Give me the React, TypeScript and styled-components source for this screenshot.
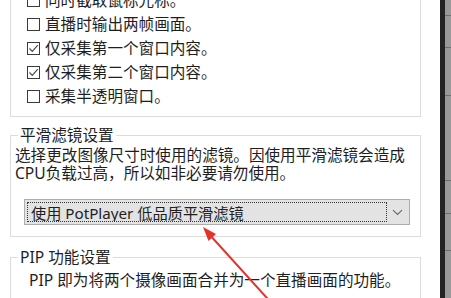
import React from "react";
import styled, { createGlobalStyle } from "styled-components";

const GlobalStyle = createGlobalStyle`
  html, body { margin: 0; padding: 0; background: #ffffff; }
  body {
    font-family: "Noto Sans", "Noto Sans CJK SC", sans-serif;
    color: #1e1e1e;
    overflow: hidden;
  }
`;

const FONT = "15.6px";

const Page = styled.div`
  position: relative;
  display: flex;
  width: 451px;
  height: 298px;
  overflow: hidden;
  background: #ffffff;
`;

const Main = styled.div`
  flex: 0 0 440px;
  padding-left: 10px;
  box-sizing: border-box;
  display: flex;
  flex-direction: column;
`;

const ListBox = styled.div`
  width: 411px;
  box-sizing: border-box;
  margin-top: -12px;
  padding: 0 0 8px 16px;
  border: 1px solid #dcdcdc;
  border-top: none;
`;

const Row = styled.div`
  display: flex;
  align-items: center;
  gap: 5px;
  height: 24px;
  font-size: ${FONT};
  line-height: 18px;
  white-space: nowrap;
`;

const Box = styled.span`
  flex: 0 0 13px;
  width: 13px;
  height: 13px;
  box-sizing: border-box;
  border: 1px solid #3a3a3a;
  background: #fff;
  display: flex;
  align-items: center;
  justify-content: center;
`;

const Group = styled.fieldset<{ $top: number }>`
  width: 411px;
  box-sizing: border-box;
  margin: ${(p) => p.$top}px 0 0;
  padding: 0 0 11px 0;
  border: 1px solid #dcdcdc;
  min-width: 0;
`;

const Legend = styled.legend`
  margin-left: 7px;
  padding: 0 2px;
  font-size: ${FONT};
  line-height: 18px;
  white-space: nowrap;
`;

const Desc = styled.div<{ $indent: number; $gap: number }>`
  padding-left: ${(p) => p.$indent}px;
  margin-top: ${(p) => p.$gap}px;
  font-size: ${FONT};
  line-height: 18px;
  white-space: nowrap;
`;

const Line = styled.div`
  height: 18px;
`;

const Select = styled.div`
  margin: 17px 0 0 13px;
  width: 386px;
  height: 26px;
  box-sizing: border-box;
  border: 1px solid #adadad;
  background: #e3e3e3;
  display: flex;
  align-items: stretch;
  padding: 2px;
`;

const SelectValue = styled.div`
  flex: 1;
  border: 1px dotted #333;
  display: flex;
  align-items: center;
  padding-left: 3px;
  font-size: 15.2px;
  white-space: nowrap;
  overflow: hidden;
`;

const Chevron = styled.div`
  flex: 0 0 20px;
  display: flex;
  align-items: center;
  justify-content: center;
`;

const Side = styled.div`
  flex: 0 0 11px;
  display: flex;
`;

const DarkEdge = styled.div`
  flex: 0 0 5px;
  background: #242424;
`;

const GrayEdge = styled.div`
  flex: 1;
  background:
    linear-gradient(#6f6f6f, #6f6f6f) 0 15px / 100% 1px no-repeat,
    linear-gradient(#6f6f6f, #6f6f6f) 0 47px / 100% 1px no-repeat,
    linear-gradient(#6f6f6f, #6f6f6f) 0 95px / 100% 1px no-repeat,
    linear-gradient(#6f6f6f, #6f6f6f) 0 180px / 100% 1px no-repeat,
    linear-gradient(#6f6f6f, #6f6f6f) 0 213px / 100% 1px no-repeat,
    linear-gradient(#6f6f6f, #6f6f6f) 0 250px / 100% 1px no-repeat,
    #9a9a9a;
`;

const Overlay = styled.svg`
  position: absolute;
  left: 0;
  top: 0;
  pointer-events: none;
`;

const Check = () => (
  <svg width="11" height="11" viewBox="0 0 11 11">
    <path d="M1.5 5.5 L4.3 8.3 L9.8 2.2" fill="none" stroke="#4a4a4a" strokeWidth="1.2" />
  </svg>
);

const CheckRow = ({ checked, label }: { checked?: boolean; label: string }) => (
  <Row>
    <Box>{checked && <Check />}</Box>
    <span>{label}</span>
  </Row>
);

export default function App() {
  return (
    <>
      <GlobalStyle />
      <Page>
        <Main>
          <ListBox>
            <CheckRow label="同时截取鼠标光标。" />
            <CheckRow label="直播时输出两帧画面。" />
            <CheckRow checked label="仅采集第一个窗口内容。" />
            <CheckRow checked label="仅采集第二个窗口内容。" />
            <CheckRow label="采集半透明窗口。" />
          </ListBox>
          <Group $top={9}>
            <Legend>平滑滤镜设置</Legend>
            <Desc $indent={4} $gap={2}>
              <Line>选择更改图像尺寸时使用的滤镜。因使用平滑滤镜会造成</Line>
              <Line>CPU负载过高，所以如非必要请勿使用。</Line>
            </Desc>
            <Select>
              <SelectValue>使用 PotPlayer 低品质平滑滤镜</SelectValue>
              <Chevron>
                <svg width="11" height="7" viewBox="0 0 11 7">
                  <path d="M1 1.2 L5.5 5.5 L10 1.2" fill="none" stroke="#666" strokeWidth="1.1" />
                </svg>
              </Chevron>
            </Select>
          </Group>
          <Group $top={11}>
            <Legend>PIP 功能设置</Legend>
            <Desc $indent={18} $gap={5}>
              <Line>PIP 即为将两个摄像画面合并为一个直播画面的功能。</Line>
            </Desc>
          </Group>
        </Main>
        <Side>
          <DarkEdge />
          <GrayEdge />
        </Side>
        <Overlay width="451" height="298" viewBox="0 0 451 298">
          <line x1="276" y1="308" x2="209" y2="234" stroke="#e2342f" strokeWidth="2" />
          <polygon points="203,227 216,234 208.5,241" fill="#e2342f" />
        </Overlay>
      </Page>
    </>
  );
}
